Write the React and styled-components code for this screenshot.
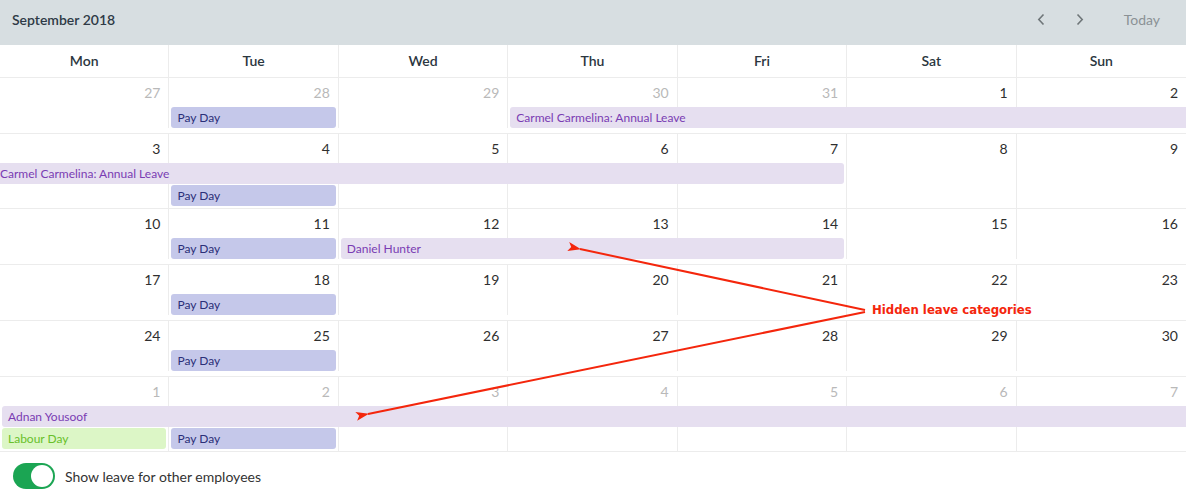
import React from 'react';
import styled, {createGlobalStyle} from 'styled-components';

const GlobalStyle = createGlobalStyle`
  body {
    margin: 0;
    background: #fff;
    font-family: Lato, "Open Sans", sans-serif;
  }
`;

const Page = styled.div`
  position: relative;
  width: 1186px;
  height: 498px;
  overflow: hidden;
`;

const Toolbar = styled.div`
  display: flex;
  align-items: center;
  height: 45px;
  box-sizing: border-box;
  padding: 0 10px 6px 12px;
  background: #d7dee1;
`;

const Title = styled.div`
  flex: 1;
  color: #2e3a46;
  font-size: 14px;
  font-weight: 600;
`;

const NavButton = styled.button`
  display: flex;
  align-items: center;
  justify-content: center;
  width: 39px;
  height: 30px;
  padding: 0;
  border: 0;
  background: none;
  color: #6f7679;
  cursor: pointer;
`;

const TodayButton = styled.button`
  margin-left: 2px;
  padding: 0 16px 0 22px;
  border: 0;
  background: none;
  color: #8a9195;
  font-family: inherit;
  font-size: 14px;
`;

const HeadRow = styled.div`
  display: grid;
  grid-template-columns: repeat(7, 1fr);
  border-bottom: 1px solid #ececec;
`;

const HeadCell = styled.div`
  height: 32px;
  line-height: 31px;
  text-align: center;
  color: #2b3640;
  font-size: 14px;
  font-weight: 600;
  border-right: ${p => (p.last ? '0' : '1px solid #ececec')};
`;

const Week = styled.div`
  display: grid;
  grid-template-columns: repeat(7, 1fr);
  grid-template-rows: 28px repeat(${p => p.lanes}, 21px);
  grid-auto-rows: 21px;
  row-gap: 1px;
  min-height: 55px;
  padding-bottom: ${p => (p.lanes > 1 ? '2px' : '0')};
  border-bottom: 1px solid #ececec;
`;

const DayCell = styled.div`
  grid-row: 1 / -1;
  grid-column: ${p => p.col};
  border-right: ${p => (p.col === 7 ? '0' : '1px solid #ececec')};
  margin-bottom: ${p => (p.lanes > 1 ? '-2px' : '0')};
  padding: 6px 8px 0 0;
  text-align: right;
  color: ${p => (p.muted ? '#b9b9b9' : '#2f2f2f')};
  font-size: 14px;
`;

const palette = {
  pay: {bg: '#c5c8ea', fg: '#2b2f78'},
  leave: {bg: '#e6dff0', fg: '#7a3cb3'},
  holiday: {bg: '#dcf6c6', fg: '#68c02a'}
};

const Event = styled.div`
  grid-column: ${p => p.from} / ${p => p.to};
  grid-row: ${p => p.lane + 1};
  z-index: 1;
  display: flex;
  align-items: center;
  margin: 0 ${p => (p.openRight ? '0' : '3px')} 0 ${p => (p.openLeft ? '0' : '2px')};
  padding-left: ${p => (p.openLeft ? '0' : '6px')};
  border-radius: ${p => (p.openLeft ? '0' : '3px')} ${p => (p.openRight ? '0 0' : '3px 3px')} ${p => (p.openLeft ? '0' : '3px')};
  background: ${p => palette[p.kind].bg};
  color: ${p => palette[p.kind].fg};
  font-size: 12px;
  white-space: nowrap;
  overflow: hidden;
`;

const Footer = styled.div`
  display: flex;
  align-items: center;
  gap: 10px;
  padding: 11px 13px;
  color: #333;
  font-size: 14px;
`;

const Switch = styled.div`
  display: flex;
  align-items: center;
  justify-content: flex-end;
  width: 42px;
  height: 26px;
  padding: 2px;
  box-sizing: border-box;
  border-radius: 13px;
  background: #1ba553;
`;

const Knob = styled.div`
  width: 22px;
  height: 22px;
  border-radius: 50%;
  background: #fff;
`;

const Overlay = styled.svg`
  position: absolute;
  left: 0;
  top: 0;
  z-index: 2;
  pointer-events: none;
`;

const Note = styled.div`
  position: absolute;
  left: 872px;
  top: 302px;
  z-index: 2;
  color: #f4260c;
  font-family: "DejaVu Sans Condensed", "DejaVu Sans", sans-serif;
  font-size: 13px;
  font-weight: bold;
`;

const days = ['Mon', 'Tue', 'Wed', 'Thu', 'Fri', 'Sat', 'Sun'];

const weeks = [
  {
    dates: [[27, 1], [28, 1], [29, 1], [30, 1], [31, 1], [1], [2]],
    lanes: 1,
    events: [
      {kind: 'pay', label: 'Pay Day', from: 2, to: 3, lane: 1},
      {kind: 'leave', label: 'Carmel Carmelina: Annual Leave', from: 4, to: 8, lane: 1, openRight: true}
    ]
  },
  {
    dates: [[3], [4], [5], [6], [7], [8], [9]],
    lanes: 2,
    events: [
      {kind: 'leave', label: 'Carmel Carmelina: Annual Leave', from: 1, to: 6, lane: 1, openLeft: true},
      {kind: 'pay', label: 'Pay Day', from: 2, to: 3, lane: 2}
    ]
  },
  {
    dates: [[10], [11], [12], [13], [14], [15], [16]],
    lanes: 1,
    events: [
      {kind: 'pay', label: 'Pay Day', from: 2, to: 3, lane: 1},
      {kind: 'leave', label: 'Daniel Hunter', from: 3, to: 6, lane: 1}
    ]
  },
  {
    dates: [[17], [18], [19], [20], [21], [22], [23]],
    lanes: 1,
    events: [{kind: 'pay', label: 'Pay Day', from: 2, to: 3, lane: 1}]
  },
  {
    dates: [[24], [25], [26], [27], [28], [29], [30]],
    lanes: 1,
    events: [{kind: 'pay', label: 'Pay Day', from: 2, to: 3, lane: 1}]
  },
  {
    dates: [[1, 1], [2, 1], [3, 1], [4, 1], [5, 1], [6, 1], [7, 1]],
    lanes: 2,
    events: [
      {kind: 'leave', label: 'Adnan Yousoof', from: 1, to: 8, lane: 1, openRight: true},
      {kind: 'holiday', label: 'Labour Day', from: 1, to: 2, lane: 2},
      {kind: 'pay', label: 'Pay Day', from: 2, to: 3, lane: 2}
    ]
  }
];

const Chevron = ({dir}) => (
  <svg width="8" height="13" viewBox="0 0 8 13" fill="none" stroke="currentColor" strokeWidth="1.6">
    {dir === 'left' ? <path d="M6.5 1.5 1.8 6.5l4.7 5" /> : <path d="M1.5 1.5 6.2 6.5l-4.7 5" />}
  </svg>
);

const App = () => (
  <Page>
    <GlobalStyle />
    <Toolbar>
      <Title>September 2018</Title>
      <NavButton><Chevron dir="left" /></NavButton>
      <NavButton><Chevron dir="right" /></NavButton>
      <TodayButton>Today</TodayButton>
    </Toolbar>
    <HeadRow>
      {days.map((d, i) => (
        <HeadCell key={d} last={i === 6}>{d}</HeadCell>
      ))}
    </HeadRow>
    {weeks.map((w, wi) => (
      <Week key={wi} lanes={w.lanes}>
        {w.dates.map(([n, muted], i) => (
          <DayCell key={i} col={i + 1} muted={!!muted} lanes={w.lanes}>{n}</DayCell>
        ))}
        {w.events.map((e, ei) => (
          <Event key={ei} {...e}>{e.label}</Event>
        ))}
      </Week>
    ))}
    <Footer>
      <Switch><Knob /></Switch>
      Show leave for other employees
    </Footer>
    <Overlay width="1186" height="498">
      <defs>
        <marker id="head" markerWidth="13" markerHeight="9" refX="1" refY="4.5" orient="auto-start-reverse" markerUnits="userSpaceOnUse">
          <path d="M0 4.5 13 0 10 4.5 13 9z" fill="#f4260c" />
        </marker>
      </defs>
      <line x1="580" y1="249" x2="865" y2="310" stroke="#f4260c" strokeWidth="2" markerStart="url(#head)" />
      <line x1="368" y1="414" x2="865" y2="312" stroke="#f4260c" strokeWidth="2" markerStart="url(#head)" />
    </Overlay>
    <Note>Hidden leave categories</Note>
  </Page>
);

export default App;
